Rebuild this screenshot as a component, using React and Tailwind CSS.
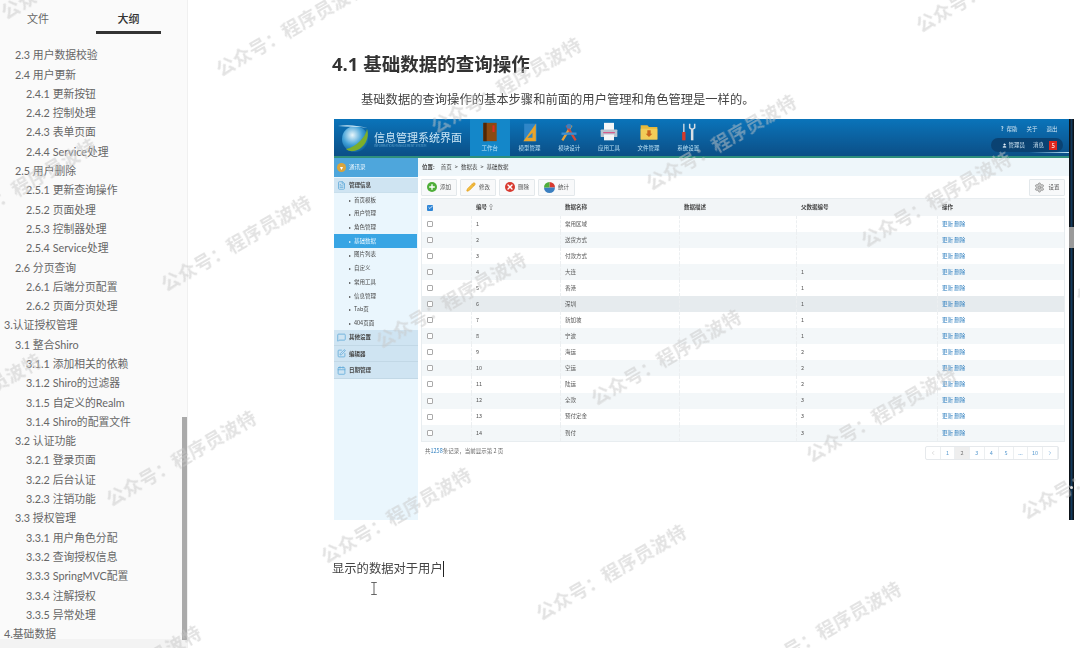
import { Check, ChevronLeft, ChevronRight, User, Settings, Pencil, Plus, X, MessageSquare, SquarePen, Calendar, FileText } from 'lucide-react'

const font = 'font-["Noto_Sans_CJK_SC","Noto_Sans",sans-serif]'

const outline = [
  [1, '2.3 用户数据校验'], [1, '2.4 用户更新'], [2, '2.4.1 更新按钮'], [2, '2.4.2 控制处理'], [2, '2.4.3 表单页面'],
  [2, '2.4.4 Service处理'], [1, '2.5 用户删除'], [2, '2.5.1 更新查询操作'], [2, '2.5.2 页面处理'], [2, '2.5.3 控制器处理'],
  [2, '2.5.4 Service处理'], [1, '2.6 分页查询'], [2, '2.6.1 后端分页配置'], [2, '2.6.2 页面分页处理'], [0, '3.认证授权管理'],
  [1, '3.1 整合Shiro'], [2, '3.1.1 添加相关的依赖'], [2, '3.1.2 Shiro的过滤器'], [2, '3.1.5 自定义的Realm'], [2, '3.1.4 Shiro的配置文件'],
  [1, '3.2 认证功能'], [2, '3.2.1 登录页面'], [2, '3.2.2 后台认证'], [2, '3.2.3 注销功能'], [1, '3.3 授权管理'],
  [2, '3.3.1 用户角色分配'], [2, '3.3.2 查询授权信息'], [2, '3.3.3 SpringMVC配置'], [2, '3.3.4 注解授权'], [2, '3.3.5 异常处理'],
  [0, '4.基础数据'],
]

const rows = [
  ['1', '常用区域', ''], ['2', '送货方式', ''], ['3', '付款方式', ''], ['4', '大连', '1'], ['5', '香港', '1'],
  ['6', '深圳', '1'], ['7', '新加坡', '1'], ['8', '宁波', '1'], ['9', '海运', '2'], ['10', '空运', '2'],
  ['11', '陆运', '2'], ['12', '全款', '3'], ['13', '预付定金', '3'], ['14', '到付', '3'],
]

const subNav = ['首页模板', '用户管理', '角色管理', '基础数据', '图片列表', '自定义', '常用工具', '信息管理', 'Tab页', '404页面']

const indent = ['pl-[4px]', 'pl-[15px]', 'pl-[26px]']

// watermark lattice: every stamp is a fixed step away from the previous one
const stamps = []
for (let b = -1; b < 4; b++) {
  for (let a = -3; a < 5; a++) {
    const x = 506 + a * 215 - b * 55
    const y = 85 + a * 57 + b * 215
    if (x > -120 && x < 1180 && y > -70 && y < 710) stamps.push([x, y])
  }
}

function ToolIcon({ name }) {
  if (name === 'book') {
    return (
      <svg viewBox="0 0 24 24" className="h-[20px] w-[20px]">
        <rect x="4" y="1" width="16" height="22" fill="#8a4a12" />
        <rect x="4" y="1" width="4" height="22" fill="#4f2706" />
        <rect x="15" y="4" width="2.5" height="8" fill="#e02a20" />
      </svg>
    )
  }
  if (name === 'ruler') {
    return (
      <svg viewBox="0 0 24 24" className="h-[20px] w-[20px]">
        <path d="M5 2h15v21H5z" fill="#2f86c8" />
        <path d="M19 2v21H4z" fill="#e9a42a" />
        <path d="M15 13v6H9z" fill="#2b83c4" />
      </svg>
    )
  }
  if (name === 'module') {
    return (
      <svg viewBox="0 0 24 24" className="h-[20px] w-[20px]" fill="none">
        <path d="M4 22 15 4" stroke="#e2a13a" strokeWidth="2.8" />
        <path d="M20 22 9 4" stroke="#d24a3a" strokeWidth="2.8" />
        <path d="M3 14h18" stroke="#3c8ed0" strokeWidth="2.8" />
        <circle cx="12" cy="5" r="3" fill="#3b7fc0" />
      </svg>
    )
  }
  if (name === 'printer') {
    return (
      <svg viewBox="0 0 24 24" className="h-[20px] w-[20px]">
        <rect x="6" y="1" width="12" height="9" fill="#f4f6f8" />
        <rect x="2" y="9" width="20" height="9" rx="1" fill="#b7c4d0" />
        <rect x="6" y="15" width="12" height="7" fill="#f4f6f8" />
        <rect x="5" y="12" width="14" height="1.5" fill="#d65a8a" />
      </svg>
    )
  }
  if (name === 'folder') {
    return (
      <svg viewBox="0 0 24 24" className="h-[20px] w-[20px]">
        <path d="M2 4h8l2 2h10v15H2z" fill="#e8b93a" />
        <path d="M2 8h20v13H2z" fill="#f2cc58" />
        <path d="M10 10h4v4h2l-4 4-4-4h2z" fill="#c9641e" />
      </svg>
    )
  }
  return (
    <svg viewBox="0 0 24 24" className="h-[20px] w-[20px]" fill="none">
      <rect x="5" y="12" width="4" height="10" fill="#d83a2a" />
      <path d="M7 2v10" stroke="#d8dfe5" strokeWidth="1.6" />
      <path d="M17 9v13" stroke="#d8dfe5" strokeWidth="3" />
      <path d="M14 2v5l3 2 3-2V2" stroke="#d8dfe5" strokeWidth="1.8" />
    </svg>
  )
}

function Logo() {
  return (
    <svg viewBox="0 0 32 34" className="h-[34px] w-[32px] shrink-0">
      <defs>
        <radialGradient id="globe" cx="0.4" cy="0.35" r="0.7">
          <stop offset="0" stopColor="#e8f6fb" />
          <stop offset="0.55" stopColor="#3f9fd6" />
          <stop offset="1" stopColor="#0b5d97" />
        </radialGradient>
      </defs>
      <ellipse cx="17" cy="18" rx="13" ry="13" fill="url(#globe)" />
      <path d="M8 28C18 26 28 16 29 8c3 8-2 20-13 22-3 .4-6 0-8-2z" fill="#7cae2b" />
      <path d="M0 5c10-2 22 0 30 2C20 5 10 6 0 5z" fill="#cfeaf6" />
    </svg>
  )
}

function SmallBtn({ children, label }) {
  return (
    <div className="flex h-[17px] items-center gap-[3px] rounded-[1px] border border-[#e3e8eb] bg-[#f8f9fa] px-[5px] text-[5.5px] text-[#555]">
      {children}
      <span>{label}</span>
    </div>
  )
}

function AppShot() {
  return (
    <div className="flex h-[401px] w-[734.5px] shrink-0 flex-col bg-white blur-[0.3px]">
      {/* product header */}
      <div className="relative flex h-[39px] shrink-0 border-b-2 border-[#2f8f7c] bg-gradient-to-b from-[#0a74ba] to-[#0b4f87]">
        <div className="flex w-[136px] items-center pl-[4px]">
          <Logo />
          <div className="ml-[4px]">
            <div className="mt-[3px] text-[11px] leading-[14px] text-[#cbe6f5]">信息管理系统界面</div>
            <div className="truncate text-[3px] leading-[5px] text-[#5fa3cf]">INFORMATION MANAGEMENT SYSTEM</div>
          </div>
        </div>
        <div className="flex">
          {[
            ['book', '工作台'], ['ruler', '模型管理'], ['module', '模块设计'],
            ['printer', '应用工具'], ['folder', '文件管理'], ['tool', '系统设置'],
          ].map(([icon, label], i) => (
            <div key={label} className={`flex w-[39.7px] flex-col items-center pt-[3px] ${i === 0 ? 'bg-[#1487c9]' : ''}`}>
              <ToolIcon name={icon} />
              <span className="mt-[2px] text-[5.5px] leading-[8px] text-[#b9e0f4]">{label}</span>
            </div>
          ))}
        </div>
        <div className="ml-auto flex w-[84px] flex-col items-end pr-[11px] pt-[6px] text-[5.5px] text-[#cfe4f2]">
          <div className="flex items-center gap-[9px] leading-[8px]">
            <span><b className="mr-[3px]">?</b>帮助</span>
            <span>关于</span>
            <span>退出</span>
          </div>
          <div className="-mr-[5px] mt-[5px] flex h-[14px] w-[72px] items-center gap-[8px] rounded-full bg-[#0a4272] pl-[11px]">
            <span className="flex items-center gap-[2px]"><User size={5} fill="#fff" />管理员</span>
            <span>消息</span>
            <span className="-ml-[3px] bg-[#e0261c] px-[2.5px] text-[6px] leading-[9px] text-white">5</span>
          </div>
        </div>
        {/* swoosh under the user pill */}
        <div className="absolute bottom-[3px] right-0 h-[1.5px] w-[40px] bg-gradient-to-r from-transparent to-[#bfe6f7]" />
      </div>

      <div className="flex min-h-0 flex-1">
        {/* left nav */}
        <div className="flex w-[84px] shrink-0 flex-col bg-[#eaf6fd] text-[5.5px] text-[#444]">
          <div className="flex h-[19px] items-center gap-[3px] bg-[#4ea6dc] pl-[3px]">
            <span className="flex h-[9px] w-[9px] items-center justify-center rounded-full bg-[#d9a53c] text-[6px] leading-none text-white">▾</span>
            <span className="text-[#eef8fe]">通讯录</span>
          </div>
          <div className="mt-px flex h-[15px] items-center gap-[3px] border-b border-[#c9dfec] bg-[#cfe4f2] pl-[3px] font-bold">
            <FileText size={9} color="#5aa7d8" />管理信息
          </div>
          <div className="flex flex-col">
            {subNav.map((s) => (
              <div key={s} className={`flex h-[13.7px] items-center gap-[3px] pl-[15px] ${s === '基础数据' ? 'mr-[1px] bg-[#38a5e4] text-[#e8f6fe]' : ''}`}>
                <span className="text-[4px]">▸</span>{s}
              </div>
            ))}
          </div>
          {[[MessageSquare, '其他设置'], [SquarePen, '编辑器'], [Calendar, '日期管理']].map(([Icon, label]) => (
            <div key={label} className="flex h-[16.3px] items-center gap-[3px] border-b border-[#c2d8e6] bg-[#cfe4f2] pl-[3px] font-bold">
              <Icon size={9} color="#5aa7d8" />{label}
            </div>
          ))}
        </div>

        {/* content */}
        <div className="flex min-w-0 flex-1 flex-col">
          <div className="flex h-[18px] shrink-0 items-center gap-[3px] bg-[#eef6fa] pl-[4px] text-[5.5px] text-[#444]">
            <b>位置:</b><span className="ml-[3px]">首页</span><span>&gt;</span><span>数据表</span><span>&gt;</span><span>基础数据</span>
          </div>
          <div className="flex h-[22px] shrink-0 items-center gap-[3px] pl-[3px] pr-[4px]">
            <SmallBtn label="添加"><span className="flex h-[10px] w-[10px] items-center justify-center rounded-full bg-[#4fae3a]"><Plus size={8} color="#fff" strokeWidth={4} /></span></SmallBtn>
            <SmallBtn label="修改"><Pencil size={10} color="#e6a020" fill="#f2c040" /></SmallBtn>
            <SmallBtn label="删除"><span className="flex h-[10px] w-[10px] items-center justify-center rounded-full bg-[#d8392f]"><X size={8} color="#fff" strokeWidth={4} /></span></SmallBtn>
            <SmallBtn label="统计">
              <svg viewBox="0 0 10 10" className="h-[11px] w-[11px]">
                <path d="M5 5V0a5 5 0 0 1 5 5z" fill="#d8392f" />
                <path d="M5 5h5a5 5 0 0 1-10 0z" fill="#3b7fc0" />
                <path d="M5 5H0a5 5 0 0 1 5-5z" fill="#4fae3a" />
              </svg>
            </SmallBtn>
            <div className="ml-auto flex h-[17px] items-center gap-[3px] rounded-[1px] border border-[#e3e8eb] bg-[#f8f9fa] px-[4px] text-[5.5px] text-[#555]">
              <Settings size={11} color="#999" fill="#ccc" />设置
            </div>
          </div>

          <div className="mx-[3px] w-[644px] border border-[#e8edf0]">
            <div className="grid h-[17px] grid-cols-[50px_89px_119px_117px_141px_1fr] items-center bg-[#f2f5f7] text-[5.5px] font-bold text-[#444]">
              <div className="pl-[5px]">
                <span className="flex h-[6px] w-[6px] items-center justify-center rounded-[1px] bg-[#2f86d6]"><Check size={5} color="#fff" strokeWidth={4} /></span>
              </div>
              <div className="pl-[4px]">编号 ⇧</div>
              <div className="pl-[4px]">数据名称</div>
              <div className="pl-[4px]">数据描述</div>
              <div className="pl-[4px]">父数据编号</div>
              <div className="pl-[4px]">操作</div>
            </div>
            {rows.map(([id, name, parent], i) => (
              <div
                key={id}
                className={`grid h-[16.05px] grid-cols-[50px_89px_119px_117px_141px_1fr] items-center text-[5.5px] text-[#555] ${id === '6' ? 'bg-[#e6ebee]' : i % 2 ? 'bg-[#f3f7f9]' : 'bg-white'}`}
              >
                <div className="flex h-full items-center border-r border-dashed border-[#eceff1] pl-[5px]"><span className="h-[6px] w-[6px] rounded-[1px] border border-[#aaa] bg-white" /></div>
                <div className="flex h-full items-center border-r border-dashed border-[#eceff1] pl-[4px]">{id}</div>
                <div className="flex h-full items-center border-r border-dashed border-[#eceff1] pl-[4px]">{name}</div>
                <div className="flex h-full items-center border-r border-dashed border-[#eceff1] pl-[4px]" />
                <div className="flex h-full items-center border-r border-dashed border-[#eceff1] pl-[4px]">{parent}</div>
                <div className="pl-[4px] text-[#2f7fbf]">更新 删除</div>
              </div>
            ))}
          </div>

          <div className="mt-[4px] flex items-start justify-between pl-[7px] pr-[10px] text-[5.5px] text-[#666]">
            <span className="leading-[10px]">共<span className="text-[#2f7fbf]">1258</span>条记录，当前显示第 2 页</span>
            <div className="flex h-[14px] items-center rounded-[2px] border border-[#e6e9ec] text-[#5a9bd0]">
              {[<ChevronLeft key="l" size={6} color="#bbb" />, '1', '2', '3', '4', '5', '...', '10', <ChevronRight key="r" size={6} />].map((p, i) => (
                <span key={i} className={`flex h-full w-[14.6px] items-center justify-center border-r border-[#eceff1] ${p === '2' ? 'bg-[#eeeeee] text-[#777]' : ''}`}>{p}</span>
              ))}
            </div>
          </div>
        </div>
      </div>
    </div>
  )
}

export default function App() {
  return (
    <div className={`relative flex h-[648px] w-[1080px] overflow-hidden bg-white ${font}`}>
      <div className="flex h-full w-full blur-[0.5px]">
        {/* outline panel */}
        <aside className='relative flex w-[188px] shrink-0 flex-col border-r border-[#f0f0f0] bg-[#fafafa] font-["Lato","Noto_Sans_CJK_SC",sans-serif]'>
          <div className="flex h-[45.7px] shrink-0 pt-[11px] text-[11px] leading-[16px]">
            <div className="w-[76px] text-center text-[#666]">文件</div>
            <div className="ml-[20px] h-[23px] w-[65px] border-b-[3px] border-[#333] text-center font-medium text-[#333]">大纲</div>
          </div>
          <div className="h-[593.3px] shrink-0 overflow-hidden text-[10.8px] text-[#666]">
            {outline.map(([level, text]) => (
              <div key={text} className={`flex h-[19.3px] items-center whitespace-nowrap ${indent[level]}`}>{text}</div>
            ))}
          </div>
          <div className="flex-1 bg-[#f3f3f3]" />
          <div className="absolute right-0 top-[417px] h-[223px] w-[5px] bg-[#aaaaaa]" />
        </aside>

        {/* document */}
        <main className="relative min-w-0 flex-1 pl-[144px] pt-[52px]">
          <h1 className='font-["Open_Sans","Noto_Sans_CJK_SC",sans-serif] text-[18.5px] font-bold leading-[24px] text-[#333]'>4.1 基础数据的查询操作</h1>
          <p className="ml-[29px] mt-[13px] whitespace-nowrap text-[12.3px] leading-[20px] text-[#444]">基础数据的查询操作的基本步骤和前面的用户管理和角色管理是一样的。</p>
          <div className="ml-[2px] mt-[10px] flex">
            <AppShot />
            {/* stray scrollbar captured at the image edge */}
            <div className="relative h-[401px] w-[5px] bg-gradient-to-r from-[#0a0a0a] via-[#123a5c] to-[#0a0a0a]">
              <div className="absolute left-0 top-[108px] h-[21px] w-full bg-[#9a9a9a]" />
              <div className="absolute left-[1px] top-[367px] h-[3px] w-[3px] rounded-full bg-[#ddd]" />
            </div>
          </div>
          <p className="mt-[40px] flex items-center text-[12.3px] leading-[17px] text-[#444]">
            显示的数据对于用户<span className="ml-[0.5px] h-[16px] w-px bg-[#222]" />
          </p>
          <svg viewBox="0 0 8 14" className="absolute left-[182px] top-[582px] h-[13px] w-[8px]" fill="none" stroke="#555" strokeWidth="1">
            <path d="M1 .5h6M4 .5v13M1 13.5h6" />
          </svg>
        </main>
      </div>

      {/* watermark sits over everything */}
      <div className="pointer-events-none absolute inset-0 overflow-hidden">
        {stamps.map(([x, y]) => (
          <div
            key={`${x}-${y}`}
            className="absolute -translate-x-1/2 -translate-y-1/2 -rotate-[30deg] whitespace-nowrap text-[18.5px] font-bold tracking-[0.4px] text-[#c8c8c8]/50 blur-[0.4px]"
            style={{ left: x, top: y }}
          >
            公众号：程序员波特
          </div>
        ))}
      </div>
    </div>
  )
}
